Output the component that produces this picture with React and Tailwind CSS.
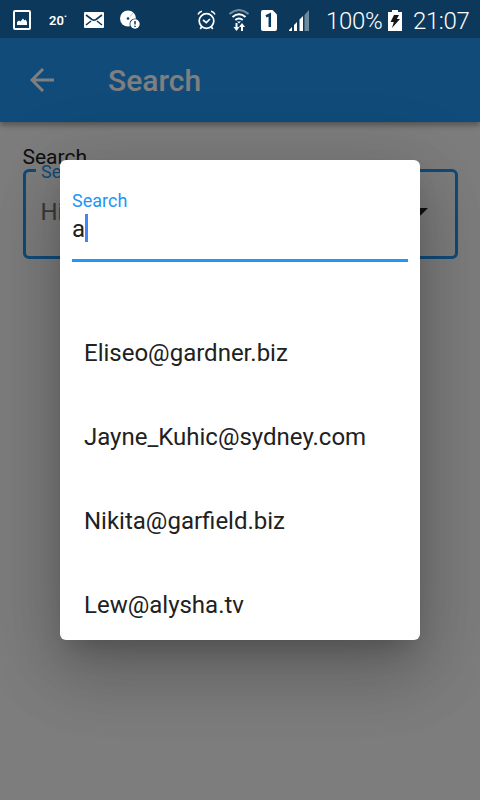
import React from "react";

const emails = [
  "Eliseo@gardner.biz",
  "Jayne_Kuhic@sydney.com",
  "Nikita@garfield.biz",
  "Lew@alysha.tv",
];

function StatusBar() {
  return (
    <header className="relative z-20 flex h-[38px] shrink-0 items-center bg-[#0c385b] pt-[2px] text-white">
      <svg className="ml-[13px] h-5 w-[18px] shrink-0" viewBox="0 0 18 20" fill="none">
        <rect x="1" y="1" width="16" height="18" rx="1" stroke="white" strokeWidth="2" />
        <path d="M4 15v-3l2-1.500 1.500 1L10 8.500l1.500 2 1-1L14 12v3z" fill="white" />
      </svg>
      <span className="ml-[18px] w-5 pt-px text-[13px] leading-5 font-semibold">20<span>˙</span></span>
      <svg className="ml-[15px] h-4 w-5 shrink-0" viewBox="0 0 20 16" fill="none">
        <rect width="20" height="16" rx="1" fill="white" />
        <path d="M2 3l6 4.500q2 1.300 4 0L18 3M2 13l5-4M18 13l-5-4" stroke="#0c385b" strokeWidth="1.600" />
      </svg>
      <svg className="ml-4 h-5 w-5 shrink-0" viewBox="0 0 20 20" fill="none">
        <circle cx="8" cy="8.500" r="8" fill="white" />
        <circle cx="8" cy="8.500" r="1.300" fill="#0c385b" />
        <path d="M10 6.500L14 2" stroke="#0c385b" strokeWidth="1" opacity=".35" />
        <circle cx="15" cy="14" r="5.500" fill="#0c385b" />
        <circle cx="15" cy="14" r="4.700" fill="white" />
        <path d="M15 11v3.500M15 15.800v1.200" stroke="#0c385b" strokeWidth="1.500" />
      </svg>
      <svg className="ml-[57px] h-5 w-[19px] shrink-0" viewBox="0 0 19 20" fill="none" stroke="white">
        <circle cx="9.500" cy="11" r="7.300" strokeWidth="1.700" />
        <path d="M1 4.500Q2 1.800 5 1.200M18 4.500Q17 1.800 14 1.200" strokeWidth="1.500" />
        <path d="M6 10l3.300 2.700L13 9M4.500 17l-1.200 2M14.500 17l1.200 2" strokeWidth="1.700" />
      </svg>
      <svg className="ml-[13px] h-[22px] w-5 shrink-0" viewBox="0 0 20 22" fill="none">
        <path d="M.5 5Q10-3 19.500 5" stroke="#728ca1" strokeWidth="2" />
        <path d="M3.500 8Q10 2.500 16.500 8M6.300 11Q10 8 13.700 11" stroke="white" strokeWidth="2" />
        <path d="M8 12.500h4L10 14.500zM6.500 14v4H4.500l3 4 3-4h-2v-4zM12 22v-4h-2l3-4 3 4h-2v4z" fill="white" />
      </svg>
      <svg className="ml-3 h-[21px] w-4 shrink-0" viewBox="0 0 16 21" fill="none">
        <path d="M2 0h9.500L16 4.500V19q0 2-2 2H2q-2 0-2-2V2q0-2 2-2z" fill="white" />
        <path d="M5 6.300L8.800 4.500V17" stroke="#0c385b" strokeWidth="2.500" />
      </svg>
      <svg className="ml-3 h-[21px] w-5 shrink-0" viewBox="0 0 20 21">
        <path d="M0 21v-1l3-3v4zM5 21v-6l3-3v9zM10.500 21V9.500l3.500-3.500v15z" fill="white" />
        <path d="M15.500 21V5L20 0v21z" fill="#6d899e" />
      </svg>
      <span className="ml-[17px] w-[57px] pt-px text-[24px] leading-[38px] font-[350] tracking-[-0.3px]">100%</span>
      <svg className="ml-[5px] h-[21px] w-[14px] shrink-0" viewBox="0 0 14 21">
        <path d="M4 0h6v2h4v19H0V2h4z" fill="white" />
        <path d="M6 5h5L8.800 9H12L4 18l1.800-6H2.500z" fill="#151515" />
      </svg>
      <span className="ml-[11px] pt-px text-[24px] leading-[38px] font-[350] tracking-[-0.4px]">21:07</span>
    </header>
  );
}

function SearchField() {
  return (
    <fieldset className="mx-[22.5px] -mt-[13px] h-[102px] rounded-[6px] border-3 border-[#2196f3] pr-[26.5px] pl-[15px]">
      <legend className="-ml-[4.5px] px-[5px] pt-1 text-[18px] leading-[22px] text-[#2196f3]">Search</legend>
      <div className="flex h-[57px] items-center">
        <span className="grow text-[24px] leading-7 text-[#757575]">Hi</span>
        <svg className="h-2 w-[15px]" viewBox="0 0 15 8">
          <path d="M0 0h15L7.500 7.500z" fill="#252525" />
        </svg>
      </div>
    </fieldset>
  );
}

function SearchDialog() {
  return (
    <section
      role="dialog"
      className="absolute top-[160px] left-[60px] flex h-[480px] w-[360px] flex-col rounded-[6px] bg-white px-3 text-[#212121] shadow-[0_16px_26px_-10px_rgba(0,0,0,0.2),0_36px_65px_4px_rgba(0,0,0,0.14),0_14px_79px_12px_rgba(0,0,0,0.12)]"
    >
      <div className="flex h-[102px] shrink-0 flex-col border-b-3 border-[#2196f3] pt-[30px]">
        <label className="text-[18px] leading-[21px] text-[#2196f3]">Search</label>
        <div className="mt-[3px] flex h-7 items-center text-[24px] leading-7">
          <span className="mt-[2px]">a</span>
          <i className="h-7 w-[3px] bg-[#4285f4]" />
        </div>
      </div>
      <ul className="mt-[49px]">
        {emails.map((email) => (
          <li key={email} className="flex h-[84px] items-center px-3 text-[24px] leading-7">
            {email}
          </li>
        ))}
      </ul>
    </section>
  );
}

export default function App() {
  return (
    <div className="relative flex h-[800px] w-[480px] flex-col overflow-hidden bg-[#fafafa] font-['Roboto',sans-serif]">
      <StatusBar />
      <div className="flex h-[84px] shrink-0 items-center bg-[#2196f3] pl-[30px] text-white shadow-[0_3px_6px_rgba(0,0,0,0.35)]">
        <svg className="h-6 w-6" viewBox="0 0 24 24" fill="none" stroke="white" strokeWidth="3">
          <path d="M24 12H3M13 1L2 12l11 11" />
        </svg>
        <h1 className="mt-[2px] ml-[54px] text-[30px] leading-9 font-medium">Search</h1>
      </div>
      <main className="flex grow flex-col pt-[23px]">
        <p className="ml-[22.5px] text-[21px] leading-[25px] text-[#212121]">Search</p>
        <SearchField />
      </main>
      <div className="absolute inset-0 z-10 bg-black/50">
        <SearchDialog />
      </div>
    </div>
  );
}
